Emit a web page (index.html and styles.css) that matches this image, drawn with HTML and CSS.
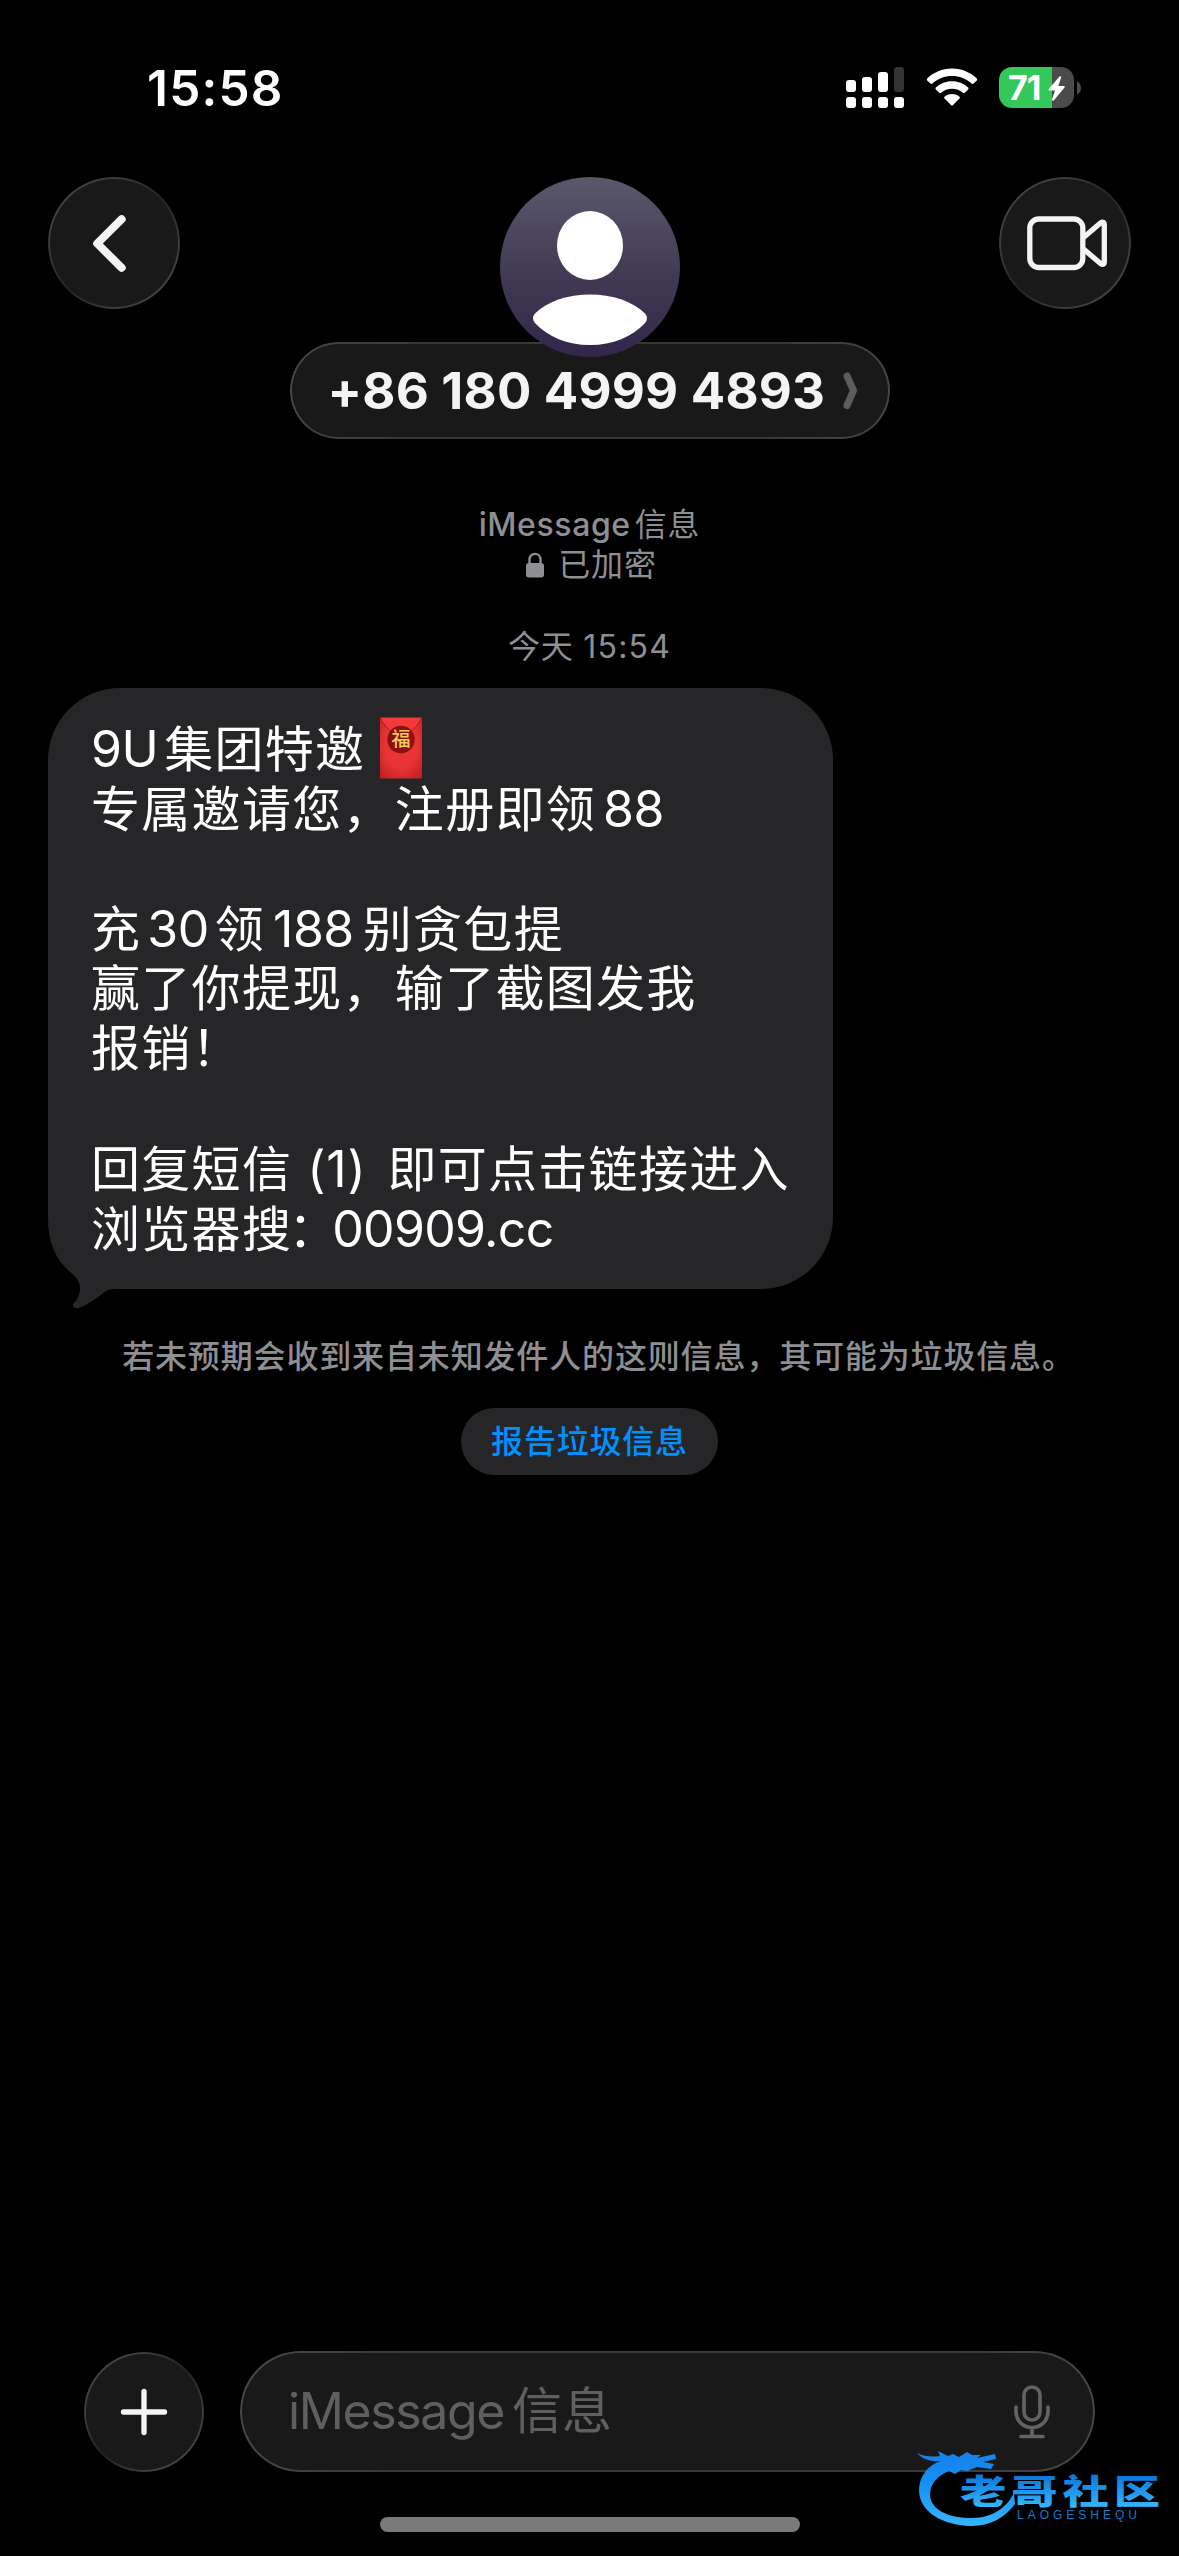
FILE: index.html
```html
<!DOCTYPE html>
<html lang="zh-CN">
<head>
<meta charset="utf-8">
<title>iMessage信息</title>
<link rel="stylesheet" href="styles.css">
</head>
<body>
<div class="screen">
  <header class="status">
    <span class="clock">15:58</span>
    <div class="indicators">
      <svg class="signal" width="58" height="41" viewBox="0 0 58 41" fill="#fff">
        <rect x="0" y="13" width="10" height="12" rx="3"/>
        <rect x="16" y="10" width="10" height="15" rx="3"/>
        <rect x="32" y="5" width="10" height="20" rx="3"/>
        <rect x="48" y="0" width="10" height="25" rx="3" fill="#333"/>
        <rect x="0" y="30" width="10" height="11" rx="3"/>
        <rect x="16" y="30" width="10" height="11" rx="3"/>
        <rect x="32" y="30" width="10" height="11" rx="3"/>
        <rect x="48" y="30" width="10" height="11" rx="3"/>
      </svg>
      <svg class="wifi" width="52" height="38" viewBox="0 0 52 38" fill="#fff">
        <path d="M26 0.500C36 0.500 44.500 4.500 50.800 10.400Q51.700 11.400 50.800 12.400L47.600 15.600Q46.600 16.400 45.600 15.500C40 10.600 33.500 8 26 8C18.500 8 12 10.600 6.400 15.500Q5.400 16.400 4.400 15.600L1.200 12.400Q0.300 11.400 1.200 10.400C7.500 4.500 16 0.500 26 0.500Z"/>
        <path d="M26 13.300C32.500 13.300 38 15.700 42.200 19.600Q43 20.500 42.100 21.400L38.700 24.700Q37.800 25.500 36.900 24.700C33.800 22.200 30.200 20.800 26 20.800C21.800 20.800 18.200 22.200 15.100 24.700Q14.200 25.500 13.300 24.700L9.900 21.400Q9 20.500 9.800 19.600C14 15.700 19.500 13.300 26 13.300Z"/>
        <path d="M26 26C29 26 31.500 27 33.500 28.700Q34.300 29.500 33.500 30.400L27 37Q26 38 25 37L18.500 30.400Q17.700 29.500 18.500 28.700C20.500 27 23 26 26 26Z"/>
      </svg>
      <div class="battery">
        <div class="cell"><span class="level">71</span></div>
        <svg class="bolt" width="20" height="27" viewBox="0 0 20 27"><path d="M12.500 1.500L1.500 14.200Q1 15.500 2.200 15.500H8L5 24.500Q5.200 26.500 7 25.200L17.700 12.300Q18 11 17 11H11.300L14.200 2.300Q14 0.500 12.500 1.500Z" fill="#fff"/></svg>
        <svg class="nub" width="4" height="14" viewBox="0 0 4 14"><path d="M0 0.500C5.300 2.500 5.300 11.500 0 13.500Z" fill="#4b4b4b"/></svg>
      </div>
    </div>
  </header>

  <nav class="top">
    <button class="glass round"><svg width="132" height="132" viewBox="0 0 132 132" fill="none" stroke="#f4f4f4" stroke-width="8" stroke-linecap="round" stroke-linejoin="round"><path d="M73.700 42.200L49.200 66.500L73.700 90.800"/></svg></button>
    <div class="contact">
      <svg class="avatar" width="180" height="180" viewBox="0 0 180 180">
        <defs><linearGradient id="sky" x1="0" y1="0" x2="0" y2="1"><stop offset="0" stop-color="#5b586a"/><stop offset="0.500" stop-color="#433c56"/><stop offset="1" stop-color="#32264b"/></linearGradient></defs>
        <circle cx="90" cy="90" r="90" fill="url(#sky)"/>
        <ellipse cx="90" cy="68.500" rx="33" ry="34.500" fill="#fff"/>
        <path d="M90 117.500C112 117.500 132 124 145 136.500Q149 141 145 146C132 160 113 168 90 168C67 168 48 160 35 146Q31 141 35 136.500C48 124 68 117.500 90 117.500Z" fill="#fff"/>
      </svg>
      <div class="glass number"><span class="phone">+86 180 4999 4893</span><svg width="16" height="38" viewBox="0 0 16 38" fill="none" stroke="#5c5c5c" stroke-width="7" stroke-linecap="round" stroke-linejoin="round"><path d="M4 4L10.500 18.500L4 33.500"/></svg></div>
    </div>
    <button class="glass round"><svg width="132" height="132" viewBox="0 0 132 132" fill="none" stroke="#f4f4f4" stroke-width="5.300" stroke-linejoin="round"><rect x="30.800" y="42" width="53" height="48.500" rx="9"/><path d="M84.500 60.500L101.500 46Q105.300 43.500 105.300 48V84.500Q105.300 89 101.500 86.500L84.500 72"/></svg></button>
  </nav>

  <main class="thread">
    <p class="meta service"><span class="lat">iMessage</span>信息</p>
    <p class="meta secure"><svg width="18" height="26" viewBox="0 0 18 26"><path d="M3.500 12V7.500C3.500 0 14.500 0 14.500 7.500V12" fill="none" stroke="#8e8e93" stroke-width="2.400"/><rect x="0" y="11" width="18" height="14.500" rx="3" fill="#8e8e93"/></svg>已加密</p>
    <p class="meta when">今天 <span class="lat">15:54</span></p>

    <div class="bubble">
      <svg class="tail" width="100" height="100" viewBox="0 0 100 100"><path d="M0 0C2 22 8 35 21 47C28 53 32 57 32 64C32 71 29 76 26 79C23 83 27 85 31 84C43 79 54 70 58 67Q61 65 66 65L100 65V0Z" fill="#262628"/></svg>
      <p><span class="lat start">9U</span>集团特邀<svg class="envelope" width="42" height="62" viewBox="0 0 42 62">
        <defs><radialGradient id="red" cx="0.500" cy="0.450" r="0.750"><stop offset="0.500" stop-color="#e93433"/><stop offset="1" stop-color="#b91d22"/></radialGradient></defs>
        <rect width="42" height="61.500" rx="1" fill="url(#red)"/>
        <path d="M0.500 0.500H41.500C38 9 31 17 21 17C11 17 4 9 0.500 0.500Z" fill="#f23a3a" stroke="#b3191d" stroke-width="1"/>
        <circle cx="21" cy="22.500" r="13.700" fill="#8c0f12"/>
        <text x="21" y="29" text-anchor="middle" class="fu">福</text>
      </svg></p>
      <p>专属邀请您<span class="comma">，</span>注册即领<span class="lat bonus">88</span></p>
      <p><br></p>
      <p>充<span class="lat">30</span>领<span class="lat prize">188</span>别贪包提</p>
      <p>赢了你提现<span class="comma">，</span>输了截图发我</p>
      <p>报销！</p>
      <p><br></p>
      <p>回复短信<span class="lat paren">(1)</span>即可点击链接进入</p>
      <p>浏览器搜<span class="colon">：</span><span class="lat link">00909.cc</span></p>
    </div>

    <p class="warning">若未预期会收到来自未知发件人的这则信息，其可能为垃圾信息。</p>
    <button class="report">报告垃圾信息</button>
  </main>

  <footer class="composer">
    <button class="glass add"><svg width="120" height="120" viewBox="0 0 120 120" stroke="#f4f4f4" stroke-width="5.300" stroke-linecap="round"><path d="M39.500 60H80.500M60 39.500V80.500"/></svg></button>
    <div class="glass field">
      <span class="placeholder"><span class="lat">iMessage</span>信息</span>
      <svg width="38" height="56" viewBox="0 0 38 56" fill="none" stroke="#636366" stroke-width="3.600" stroke-linecap="round"><rect x="11" y="3" width="16" height="33" rx="8"/><path d="M3 23V27C3 49 35 49 35 27V23M19 43.500V52M8 52.500H30"/></svg>
    </div>
  </footer>
  <div class="home"></div>

  <div class="watermark">
    <svg width="250" height="90" viewBox="0 0 250 90">
      <defs><linearGradient id="blue" gradientUnits="userSpaceOnUse" x1="0" y1="5" x2="0" y2="80"><stop offset="0" stop-color="#1583ea"/><stop offset="0.400" stop-color="#1590f5"/><stop offset="1" stop-color="#38b8fb"/></linearGradient>
      <linearGradient id="ink" gradientUnits="userSpaceOnUse" x1="0" y1="-34" x2="0" y2="3"><stop offset="0" stop-color="#0b78dc"/><stop offset="1" stop-color="#35b5fa"/></linearGradient></defs>
      <path transform="translate(0 6)" fill="url(#blue)" d="M0 4C8 8 16 8 23 7L21 2L31 7L36 5L42 8L50 3L55 6L64 6L60 9L78 5L79 10L66 13L77 15L74 20L60 18L50 22L44 21L38 25L32 22C20 27 13 35 13 46C14 62 33 69 55 69C76 69 90 58 97 44L98 55C88 68 74 77 54 77C25 76 3 63 2 42C2 27 11 16 24 12C14 13 5 10 0 4Z"/>
      <text class="brand" transform="translate(43 61) scale(1.130 .82)" textLength="177">老哥社区</text>
      <text class="latin" x="100" y="76" textLength="120">LAOGESHEQU</text>
    </svg>
  </div>
</div>
</body>
</html>
```
FILE: styles.css
```css
* { box-sizing: border-box; margin: 0; padding: 0; }
body { background: #000; color: #fff; font-family: Inter, "Noto Sans CJK SC", sans-serif; }
svg { display: block; flex: none; }
button { border: 0; color: inherit; font: inherit; }
.screen { position: relative; display: flex; flex-direction: column; width: 1179px; height: 2556px; overflow: hidden; background: #000; }

.status { display: flex; justify-content: space-between; height: 177px; padding: 67px 98px 0 147px; }
.clock { font-size: 49.500px; line-height: 43px; font-weight: 600; letter-spacing: 1.200px; }
.indicators { display: flex; gap: 21px; height: 41px; }
.signal { margin-right: 1px; }
.wifi { margin-top: 1px; }
.battery { position: relative; display: flex; align-items: center; gap: 3px; }
.cell { width: 75px; height: 41px; padding-left: 9px; border-radius: 13px; background: linear-gradient(90deg, #34c759 53px, #4b4b4b 53px); }
.level { font-size: 34px; line-height: 41px; font-weight: 700; letter-spacing: -1px; }
.bolt { position: absolute; left: 48px; top: 8px; }

.glass { position: relative; background: #191919; }
.glass::before { content: ""; position: absolute; inset: 0; padding: 2px; border-radius: inherit; background: linear-gradient(135deg, #4a4a4a, #3a3a3a 28%, #232323 50%, #3a3a3a 72%, #4a4a4a); mask: linear-gradient(#000 0 0) content-box exclude, linear-gradient(#000 0 0); pointer-events: none; }
.number::before, .field::before { background: linear-gradient(100deg, #484848, #383838 20%, #383838 80%, #484848); }
.top { display: flex; justify-content: space-between; align-items: flex-start; height: 262px; padding: 0 48px; }
.round { width: 132px; height: 132px; border-radius: 50%; }
.contact { display: flex; flex-direction: column; align-items: center; }
.avatar { position: relative; z-index: 1; }
.number { display: flex; align-items: center; justify-content: space-between; width: 600px; height: 97px; margin-top: -15px; padding: 0 31px 0 38px; border-radius: 49px; }
.phone { color: #f4f4f4; font-size: 51px; font-weight: 650; line-height: 98px; letter-spacing: .2px; white-space: nowrap; }

.thread { display: flex; flex-direction: column; align-items: center; padding-top: 66px; }
.meta { display: flex; align-items: center; color: #8e8e93; font-size: 32px; line-height: 40px; letter-spacing: .8px; white-space: pre; }
.service .lat { margin-right: 4px; font-weight: 500; letter-spacing: .6px; }
.secure { padding-left: 4px; }
.secure svg { margin-right: 14px; }
.when { margin-top: 42px; }
.when .lat { letter-spacing: 1.200px; }
.bubble { position: relative; align-self: flex-start; width: 785px; height: 601px; margin: 21px 0 0 48px; padding: 31px 0 0 43px; border-radius: 72px; background: #262628; font-size: 49px; letter-spacing: 1.300px; }
.bubble p { position: relative; display: flex; align-items: baseline; height: 60px; line-height: 60px; white-space: nowrap; }
.bubble .lat { margin: 0 6px; font-size: 50px; letter-spacing: -.5px; }
.bubble .start { margin-left: 0; }
.bubble .bonus { margin-left: 7px; }
.bubble .prize { margin: 0 9px 0 8px; }
.bubble .comma { margin-right: 2px; }
.bubble .paren { margin: 0 21px 0 15px; letter-spacing: .8px; }
.bubble .colon { width: 44px; margin-left: -4px; }
.bubble .link { margin-left: 0; letter-spacing: -.7px; }
.envelope { align-self: flex-start; margin: -2px 0 0 15px; }
.fu { fill: #f4cf52; font: 500 19px "Noto Sans CJK SC", sans-serif; letter-spacing: 0; }
.tail { position: absolute; left: 0; bottom: -35px; }
.warning { margin-top: 45px; padding-left: 18px; color: #8e8e93; font-size: 32px; line-height: 46px; letter-spacing: .850px; font-weight: 500; white-space: nowrap; }
.report { width: 257px; height: 67px; margin-top: 28px; border-radius: 34px; background: #262628; color: #0091ff; font-size: 32px; line-height: 67px; letter-spacing: .8px; font-weight: 500; }

.composer { display: flex; gap: 36px; margin-top: auto; padding: 0 84px; align-items: center; }
.add { width: 120px; height: 120px; border-radius: 50%; }
.field { display: flex; align-items: center; justify-content: space-between; width: 855px; height: 121px; padding: 0 44px 0 48px; border-radius: 61px; }
.placeholder { color: #5f5f62; font-size: 50px; line-height: 121px; white-space: nowrap; }
.placeholder .lat { margin-right: 8px; letter-spacing: -1.400px; }
.home { align-self: center; width: 420px; height: 15px; margin: 45px 0 24px; border-radius: 8px; background: #7a7a7a; }
.watermark { position: absolute; left: 917px; top: 2443px; }
.brand { fill: url(#ink); font: 900 41px "Noto Sans CJK SC", sans-serif; }
.latin { fill: #147cc8; font: 400 12px "Liberation Sans", sans-serif; }
```
